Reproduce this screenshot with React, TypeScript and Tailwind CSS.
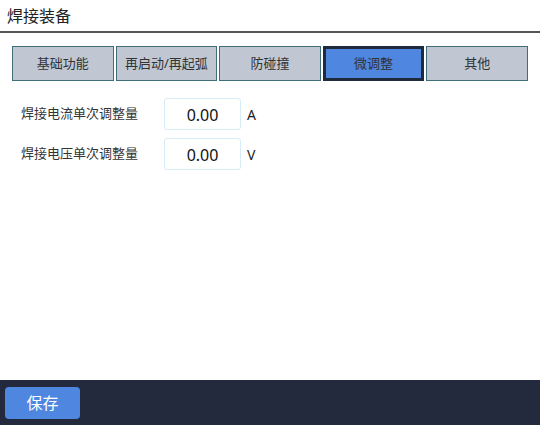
import { useState } from "react";

const tabs = ["基础功能", "再启动/再起弧", "防碰撞", "微调整", "其他"];

const rows = [
  { label: "焊接电流单次调整量", value: "0.00", unit: "A" },
  { label: "焊接电压单次调整量", value: "0.00", unit: "V" },
];

const App = () => {
  const [active, setActive] = useState(3);

  return (
    <div
      className="w-[540px] h-[425px] flex flex-col bg-white text-[#222]"
      style={{ fontFamily: '"Noto Sans", "Noto Sans CJK SC", sans-serif' }}
    >
      {/* Header */}
      <div className="h-[31px] flex items-center px-[7px] text-[16px] leading-none">
        焊接装备
      </div>
      <div className="h-[2px] bg-[#555]" />

      {/* Tabs */}
      <div className="flex gap-[2px] pl-[12px] pt-[13px]">
        {tabs.map((tab, index) => (
          <button
            key={tab}
            onClick={() => setActive(index)}
            className={`w-[101.6px] h-[35px] flex items-center justify-center text-[13px] text-[#333] cursor-pointer ${
              active === index
                ? "bg-[#4f86e0] border-[3px] border-[#1f2b3c]"
                : "bg-[#c0c7d3] border border-[#3f7079]"
            }`}
          >
            {tab}
          </button>
        ))}
      </div>

      {/* Settings */}
      <div className="flex flex-col gap-[8px] pt-[17px] pl-[21px]">
        {rows.map((row) => (
          <div key={row.label} className="flex items-center">
            <span className="w-[143px] text-[13px] text-[#333]">{row.label}</span>
            <div className="w-[77px] h-[32px] flex items-center justify-center pt-[2px] border border-[#d6ecf6] rounded-[3px] text-[16px] text-[#111]">
              {row.value}
            </div>
            <span className="ml-[6px] text-[14px] text-[#222]">{row.unit}</span>
          </div>
        ))}
      </div>

      <div className="flex-1" />

      {/* Footer */}
      <div className="h-[45px] bg-[#242a3e] flex items-center px-[5px]">
        <button className="w-[75px] h-[32px] rounded-[4px] bg-[#4f87e0] text-white text-[16px] cursor-pointer">
          保存
        </button>
      </div>
    </div>
  );
};

export default App;
